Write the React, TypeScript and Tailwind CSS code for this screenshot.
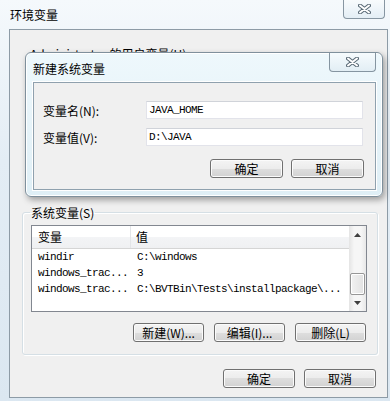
import React from 'react';

const cjk = "font-['Noto_Sans_CJK_SC','Noto_Sans',sans-serif]";
const mono = "font-['Liberation_Mono','Noto_Sans_CJK_SC',monospace]";

const CloseGlyph: React.FC = () => (
  <svg width="13" height="10" viewBox="0 0 13 10">
    <path d="M2 1.5 L11 8.5 M11 1.5 L2 8.5" stroke="#5a6a76" strokeWidth="4" strokeLinecap="round" />
    <path d="M2 1.5 L11 8.5 M11 1.5 L2 8.5" stroke="#ffffff" strokeWidth="2" strokeLinecap="round" />
  </svg>
);

const WinButton: React.FC<{ label: string; w: string }> = ({ label, w }) => (
  <button
    className={`${w} h-[19px] ${cjk} text-[12px] leading-[15px] text-black rounded-[3px] border border-[#707070] bg-[linear-gradient(#f4f4f4_0%,#ececec_50%,#dedede_50%,#d2d2d2_100%)] shadow-[inset_0_0_0_1px_#fbfbfb] flex items-center justify-center`}
  >
    {label}
  </button>
);

const rows = [
  { name: 'windir', value: 'C:\\windows' },
  { name: 'windows_trac...', value: '3' },
  { name: 'windows_trac...', value: 'C:\\BVTBin\\Tests\\installpackage\\...' },
];

const NewVarDialog: React.FC = () => (
  <div className="absolute left-[25px] top-[52px] w-[358px] h-[145px] rounded-[6px] border border-[#7f909c] bg-[linear-gradient(to_bottom,#eef8fc,#dfeff6)] shadow-[2px_3px_6px_rgba(0,0,0,0.35),inset_0_0_0_1px_#ffffff] flex flex-col">
    <div className="h-[29px] flex items-start justify-between">
      <span className={`${cjk} text-[12px] leading-[15px] text-black ml-[7px] mt-[8px]`}>新建系统变量</span>
      <div className="mr-[6px] w-[47px] h-[19px] rounded-b-[4px] border border-t-0 border-[#8595a1] bg-[linear-gradient(#f6fbfd,#e2eef4)] flex items-center justify-center">
        <CloseGlyph />
      </div>
    </div>
    <div className="ml-[7px] mr-[6px] mb-[6px] flex-1 border border-[#8fa1ae] bg-[#f0f0f0] shadow-[0_0_0_1px_#ffffff] flex flex-col pt-[18px] pl-[9px] pr-[11px]">
      <div className="flex items-center h-[18px]">
        <span className={`${cjk} text-[12px] leading-[15px] w-[103px]`}>变量名(N):</span>
        <div className={`w-[217px] h-[18px] bg-white border border-[#e2e3ea] border-t-[#d0d3d9] ${mono} text-[11px] tracking-[-0.6px] leading-[16px] pl-[2px]`}>JAVA_HOME</div>
      </div>
      <div className="flex items-center h-[18px] mt-[9px]">
        <span className={`${cjk} text-[12px] leading-[15px] w-[103px]`}>变量值(V):</span>
        <div className={`w-[217px] h-[18px] bg-white border border-[#e2e3ea] border-t-[#d0d3d9] ${mono} text-[11px] tracking-[-0.6px] leading-[16px] pl-[2px]`}>D:\JAVA</div>
      </div>
      <div className="flex justify-end gap-[8px] mt-[13px]">
        <WinButton label="确定" w="w-[73px]" />
        <WinButton label="取消" w="w-[73px]" />
      </div>
    </div>
  </div>
);

export default function App() {
  return (
    <div className="relative w-[390px] h-[401px] overflow-hidden bg-[linear-gradient(to_bottom,#f5f9fc_0%,#e3edf5_40%,#dbe7f1_100%)] flex flex-col">
      {/* title bar */}
      <div className="h-[29px] flex items-start justify-between shrink-0">
        <span className={`${cjk} text-[12px] leading-[15px] text-black ml-[10px] mt-[7px]`}>环境变量</span>
        <div className="mr-[5px] w-[42px] h-[19px] rounded-b-[4px] border border-t-0 border-[#8796a2] bg-[linear-gradient(#f8fbfd,#e4eef5)] flex items-center justify-center">
          <CloseGlyph />
        </div>
      </div>

      {/* client area */}
      <div className="ml-[9px] mr-[2px] mb-[3px] flex-1 border border-[#8d9ba6] bg-[#f0f0f0] flex flex-col">
        <div className={`${cjk} text-[12px] leading-[15px] ml-[20px] mt-[16px] h-[159px]`}>
          Administrator 的用户变量(U)
        </div>

        <fieldset className="ml-[12px] w-[356px] border border-[#d5dfe5] rounded-[3px] shadow-[inset_1px_1px_0_#ffffff,1px_1px_0_#ffffff] pb-[12px]">
          <legend className={`${cjk} text-[12px] leading-[15px] ml-[7px] px-[1px]`}>系统变量(S)</legend>
          <div className="ml-[8px] mt-[5px] w-[336px] h-[87px] border border-[#828790] bg-white flex">
            <div className="flex-1 flex flex-col">
              <div className="h-[23px] flex border-b border-[#d5d5d5] bg-[linear-gradient(#ffffff_0%,#ffffff_50%,#f3f4f6_50%,#eff0f2_100%)]">
                <div className={`w-[99px] border-r border-[#e3e5e8] ${cjk} text-[12px] leading-[22px] pl-[6px]`}>变量</div>
                <div className={`${cjk} text-[12px] leading-[22px] pl-[5px]`}>值</div>
              </div>
              {rows.map((r, i) => (
                <div key={i} className={`h-[16px] flex ${mono} text-[11px] tracking-[-0.6px] leading-[16px] text-black`}>
                  <div className="w-[99px] pl-[6px]">{r.name}</div>
                  <div className="pl-[6px] whitespace-nowrap">{r.value}</div>
                </div>
              ))}
            </div>
            {/* scrollbar */}
            <div className="w-[17px] bg-[linear-gradient(to_right,#e4e4e4,#f6f6f6_30%,#f6f6f6_70%,#e8e8e8)] flex flex-col items-center">
              <div className="h-[17px] flex items-center justify-center">
                <svg width="7" height="4" viewBox="0 0 7 4"><path d="M0 4 L3.5 0 L7 4 Z" fill="#404040" /></svg>
              </div>
              <div className="flex-1" />
              <div className="w-[15px] h-[22px] rounded-[2px] border border-[#979797] bg-[linear-gradient(to_right,#f2f2f2,#e2e2e2)] shadow-[inset_0_0_0_1px_#ffffff]" />
              <div className="h-[16px] flex items-center justify-center">
                <svg width="7" height="4" viewBox="0 0 7 4"><path d="M0 0 L7 0 L3.5 4 Z" fill="#404040" /></svg>
              </div>
            </div>
          </div>
          <div className="flex justify-end gap-[10px] mt-[11px] mr-[11px]">
            <WinButton label="新建(W)..." w="w-[71px]" />
            <WinButton label="编辑(I)..." w="w-[71px]" />
            <WinButton label="删除(L)" w="w-[71px]" />
          </div>
        </fieldset>

        <div className="flex justify-end gap-[9px] mt-[14px] mr-[11px]">
          <WinButton label="确定" w="w-[72px]" />
          <WinButton label="取消" w="w-[72px]" />
        </div>
      </div>

      <NewVarDialog />
    </div>
  );
}
